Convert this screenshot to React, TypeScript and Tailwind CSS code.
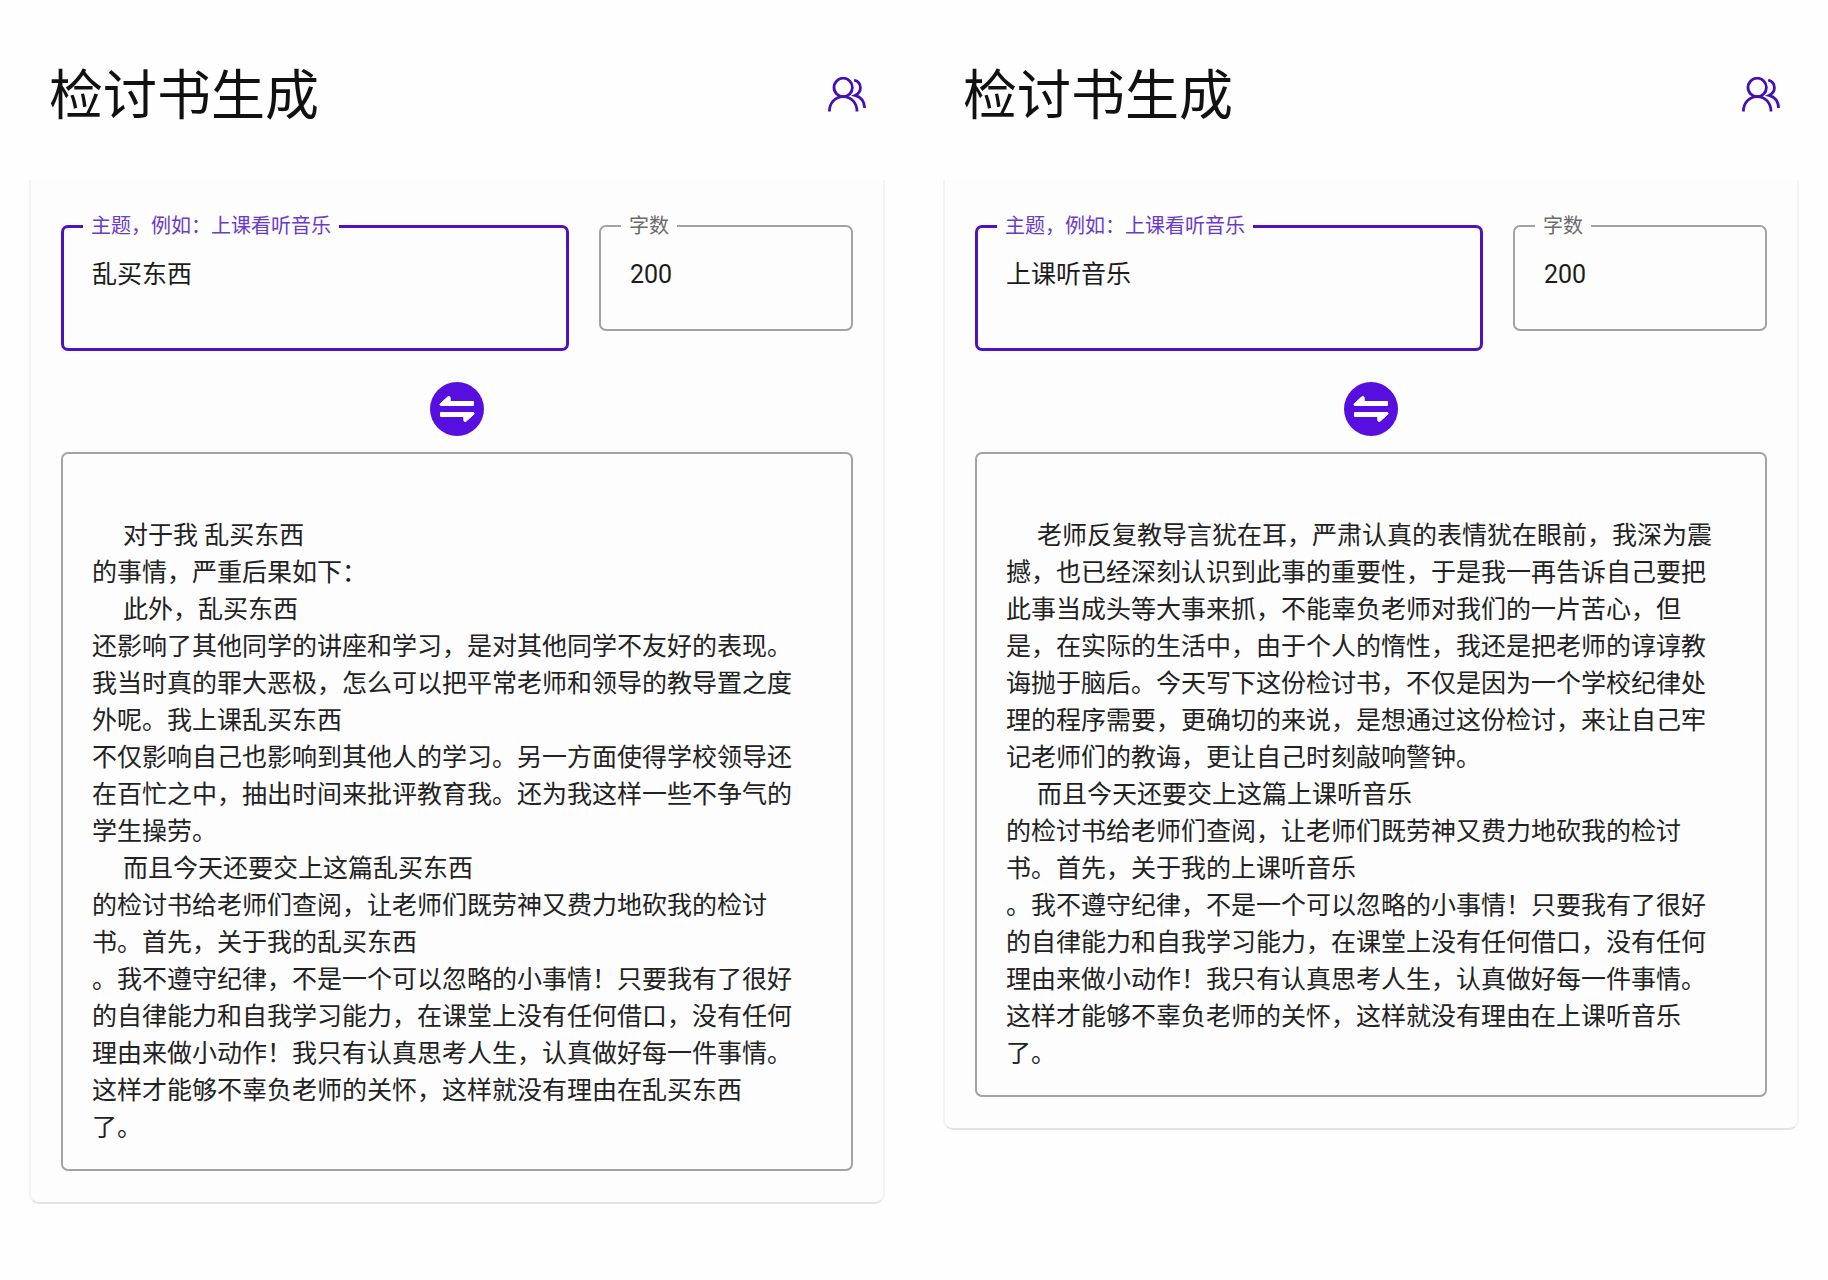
import { useId, useState } from "react";

const TOPIC_LABEL = "主题，例如：上课看听音乐";

const LEFT_TEXT = [
  "",
  "     对于我 乱买东西",
  "的事情，严重后果如下：",
  "     此外，乱买东西",
  "还影响了其他同学的讲座和学习，是对其他同学不友好的表现。",
  "我当时真的罪大恶极，怎么可以把平常老师和领导的教导置之度",
  "外呢。我上课乱买东西",
  "不仅影响自己也影响到其他人的学习。另一方面使得学校领导还",
  "在百忙之中，抽出时间来批评教育我。还为我这样一些不争气的",
  "学生操劳。",
  "     而且今天还要交上这篇乱买东西",
  "的检讨书给老师们查阅，让老师们既劳神又费力地砍我的检讨",
  "书。首先，关于我的乱买东西",
  "。我不遵守纪律，不是一个可以忽略的小事情！只要我有了很好",
  "的自律能力和自我学习能力，在课堂上没有任何借口，没有任何",
  "理由来做小动作！我只有认真思考人生，认真做好每一件事情。",
  "这样才能够不辜负老师的关怀，这样就没有理由在乱买东西",
  "了。",
].join("\n");

const RIGHT_TEXT = [
  "",
  "     老师反复教导言犹在耳，严肃认真的表情犹在眼前，我深为震",
  "撼，也已经深刻认识到此事的重要性，于是我一再告诉自己要把",
  "此事当成头等大事来抓，不能辜负老师对我们的一片苦心，但",
  "是，在实际的生活中，由于个人的惰性，我还是把老师的谆谆教",
  "诲抛于脑后。今天写下这份检讨书，不仅是因为一个学校纪律处",
  "理的程序需要，更确切的来说，是想通过这份检讨，来让自己牢",
  "记老师们的教诲，更让自己时刻敲响警钟。",
  "     而且今天还要交上这篇上课听音乐",
  "的检讨书给老师们查阅，让老师们既劳神又费力地砍我的检讨",
  "书。首先，关于我的上课听音乐",
  "。我不遵守纪律，不是一个可以忽略的小事情！只要我有了很好",
  "的自律能力和自我学习能力，在课堂上没有任何借口，没有任何",
  "理由来做小动作！我只有认真思考人生，认真做好每一件事情。",
  "这样才能够不辜负老师的关怀，这样就没有理由在上课听音乐",
  "了。",
].join("\n");

function UsersIcon() {
  return (
    <svg
      width="38"
      height="36"
      viewBox="0 0 38 36"
      fill="none"
      stroke="#4310b4"
      strokeWidth="2.8"
      aria-hidden="true"
    >
      <circle cx="15.2" cy="10.4" r="9.2" />
      <path d="M1.4 34.400C1.400 26 7 19.600 15.200 19.600S29 26 29 34.400" />
      <path d="M26.200 3.200c4 1 6.200 4 6.200 7.600 0 3.400-2 6-5.400 7.600 5.600 1.400 9.200 6 9.600 12.600" />
    </svg>
  );
}

function SwapIcon() {
  return (
    <svg
      width="54"
      height="54"
      viewBox="0 0 54 54"
      fill="#ffffff"
      stroke="#ffffff"
      strokeWidth="1"
      strokeLinejoin="round"
      aria-hidden="true"
    >
      <path d="M43.500 19.500v4H11c-1.200 0-1.400-1.200-.6-2l7.600-6.800c1-.8 2.200 0 2.200 1.200v3.600z" />
      <path d="M10.500 34.500v-4H43c1.200 0 1.400 1.200.6 2L36 39.300c-1 .8-2.200 0-2.200-1.200v-3.600z" />
    </svg>
  );
}

type PanelProps = { initialTopic: string; result: string };

function Panel({ initialTopic, result }: PanelProps) {
  const id = useId();
  const [topic, setTopic] = useState(initialTopic);
  const [count, setCount] = useState("200");
  return (
    <section className="min-w-0 pb-8">
      <header className="flex h-[180px] items-start justify-between pt-[57px] pr-12 pl-[49px]">
        <h1 className="text-[54px] leading-[80px] text-[#111111]">检讨书生成</h1>
        <button type="button" aria-label="用户" className="mt-5">
          <UsersIcon />
        </button>
      </header>

      <div className="mx-[29px] rounded-b-[10px] border-x-2 border-b-2 border-x-[#f3f3f3] border-b-[#e3e3e3] bg-[#fdfdfd] px-[30px] pt-[45px] pb-[31px]">
        <div className="flex items-start gap-[30px]">
          <div className="relative min-w-0 flex-[2]">
            <label
              htmlFor={`${id}-topic`}
              className="absolute -top-[14px] left-[22px] bg-[#fdfdfd] px-2 text-[20px] leading-[30px] whitespace-nowrap text-[#6a3acb]"
            >
              {TOPIC_LABEL}
            </label>
            <textarea
              id={`${id}-topic`}
              rows={2}
              value={topic}
              onChange={(e) => setTopic(e.target.value)}
              className="block w-full resize-none overflow-hidden rounded-[7px] border-[3px] border-[#4f12bd] px-[28px] pt-[28px] pb-[18px] text-[25px] leading-[37px] text-[#1c1c1c] outline-none"
            />
          </div>
          <div className="relative min-w-0 flex-1">
            <label
              htmlFor={`${id}-count`}
              className="absolute -top-[14px] left-[22px] bg-[#fdfdfd] px-2 text-[20px] leading-[30px] whitespace-nowrap text-[#6b6b6b]"
            >
              字数
            </label>
            <input
              id={`${id}-count`}
              type="text"
              inputMode="numeric"
              value={count}
              onChange={(e) => setCount(e.target.value)}
              className="block w-full rounded-[7px] border-2 border-[#a3a3a3] px-[29px] pt-[29px] pb-[36px] text-[25px] leading-[37px] text-[#1c1c1c] outline-none"
            />
          </div>
        </div>

        <div className="flex justify-center pt-[31px] pb-4">
          <button type="button" aria-label="生成" className="rounded-full bg-[#570fe0]">
            <SwapIcon />
          </button>
        </div>

        <textarea
          readOnly
          aria-label="检讨书"
          value={result}
          className="block field-sizing-content w-full resize-none overflow-hidden rounded-[7px] border-2 border-[#a3a3a3] pt-[26px] pr-5 pb-[23px] pl-[29px] text-[25px] leading-[37px] text-[#222222] outline-none"
        />
      </div>
    </section>
  );
}

export default function App() {
  return (
    <main className="grid min-h-screen grid-cols-2 items-start bg-[#fefefe] font-[Roboto,'Noto_Sans_CJK_SC',sans-serif]">
      <Panel initialTopic="乱买东西" result={LEFT_TEXT} />
      <Panel initialTopic="上课听音乐" result={RIGHT_TEXT} />
    </main>
  );
}
